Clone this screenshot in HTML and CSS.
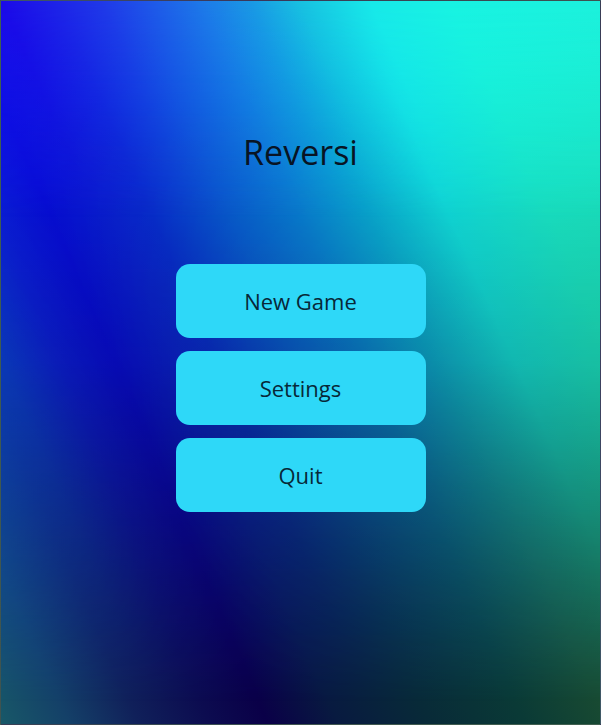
FILE: index.html
```html
<!DOCTYPE html>
<html lang="en">
<head>
<meta charset="utf-8">
<title>Reversi</title>
<link rel="stylesheet" href="styles.css">
</head>
<body>
<main class="screen">
  <h1 class="title">Reversi</h1>
  <nav class="menu">
    <button class="menu-btn" type="button">New Game</button>
    <button class="menu-btn" type="button">Settings</button>
    <button class="menu-btn" type="button">Quit</button>
  </nav>
</main>
</body>
</html>
```
FILE: styles.css
```css
html, body {
  margin: 0;
  padding: 0;
}

body {
  width: 601px;
  height: 725px;
  overflow: hidden;
  font-family: "Open Sans", "Noto Sans", sans-serif;
}

.screen {
  position: relative;
  box-sizing: border-box;
  width: 601px;
  height: 725px;
  border: 1px solid rgba(90, 90, 100, 0.6);
  padding-top: 128px;
  display: flex;
  flex-direction: column;
  align-items: center;
  background: linear-gradient(66deg,
    #185868 0%,
    #144068 7.5%,
    #10205a 15%,
    #0c0c50 22.6%,
    #0a0048 29%,
    #081a40 36.7%,
    #082a38 46.4%,
    #0a3a36 57%,
    #184a32 66%,
    #1a5a30 80%,
    #1a6a30 100%);
}

/* mid-height bright layer, fading out towards the bottom */
.screen::before {
  content: "";
  position: absolute;
  inset: 0;
  background: linear-gradient(66deg,
    #0a70e8 0%,
    #0848ea 17.6%,
    #0a24f0 24%,
    #0610ee 30%,
    #0a22e8 37%,
    #082ee6 41%,
    #0861e8 49.5%,
    #0886ea 57.1%,
    #05b4ea 64.6%,
    #0eeef5 73.3%,
    #18f6dc 84.1%,
    #1cf0cc 100%);
  -webkit-mask-image: linear-gradient(to bottom,
    #000 0%,
    rgba(0, 0, 0, 0.85) 25%,
    rgba(0, 0, 0, 0.65) 50%,
    rgba(0, 0, 0, 0.3) 75%,
    rgba(0, 0, 0, 0) 97%);
  mask-image: linear-gradient(to bottom,
    #000 0%,
    rgba(0, 0, 0, 0.85) 25%,
    rgba(0, 0, 0, 0.65) 50%,
    rgba(0, 0, 0, 0.3) 75%,
    rgba(0, 0, 0, 0) 97%);
}

/* violet-tinted top band */
.screen::after {
  content: "";
  position: absolute;
  inset: 0;
  background: linear-gradient(66deg,
    #0a40e0 0%,
    #1a10ea 30%,
    #1c0ae8 35%,
    #2038e8 45.8%,
    #1e78e8 56.6%,
    #1a98e4 62%,
    #18c0e0 67.4%,
    #18e8e8 75%,
    #18f2e2 83.7%,
    #1cf0dc 100%);
  -webkit-mask-image: linear-gradient(to bottom,
    #000 0%,
    rgba(0, 0, 0, 0.55) 12%,
    rgba(0, 0, 0, 0) 30%);
  mask-image: linear-gradient(to bottom,
    #000 0%,
    rgba(0, 0, 0, 0.55) 12%,
    rgba(0, 0, 0, 0) 30%);
}

.title {
  position: relative;
  z-index: 1;
  margin: 0;
  font-size: 34px;
  font-weight: 400;
  line-height: 46px;
  color: #081424;
}

.menu {
  position: relative;
  z-index: 1;
  margin-top: 89px;
  display: flex;
  flex-direction: column;
  gap: 13px;
}

.menu-btn {
  width: 250px;
  height: 74px;
  border: none;
  border-radius: 14px;
  background: #2ed8f8;
  color: #072838;
  font-family: "Open Sans", "Noto Sans", sans-serif;
  font-size: 22px;
  line-height: 30px;
  padding: 0;
  display: flex;
  align-items: center;
  justify-content: center;
}
```
